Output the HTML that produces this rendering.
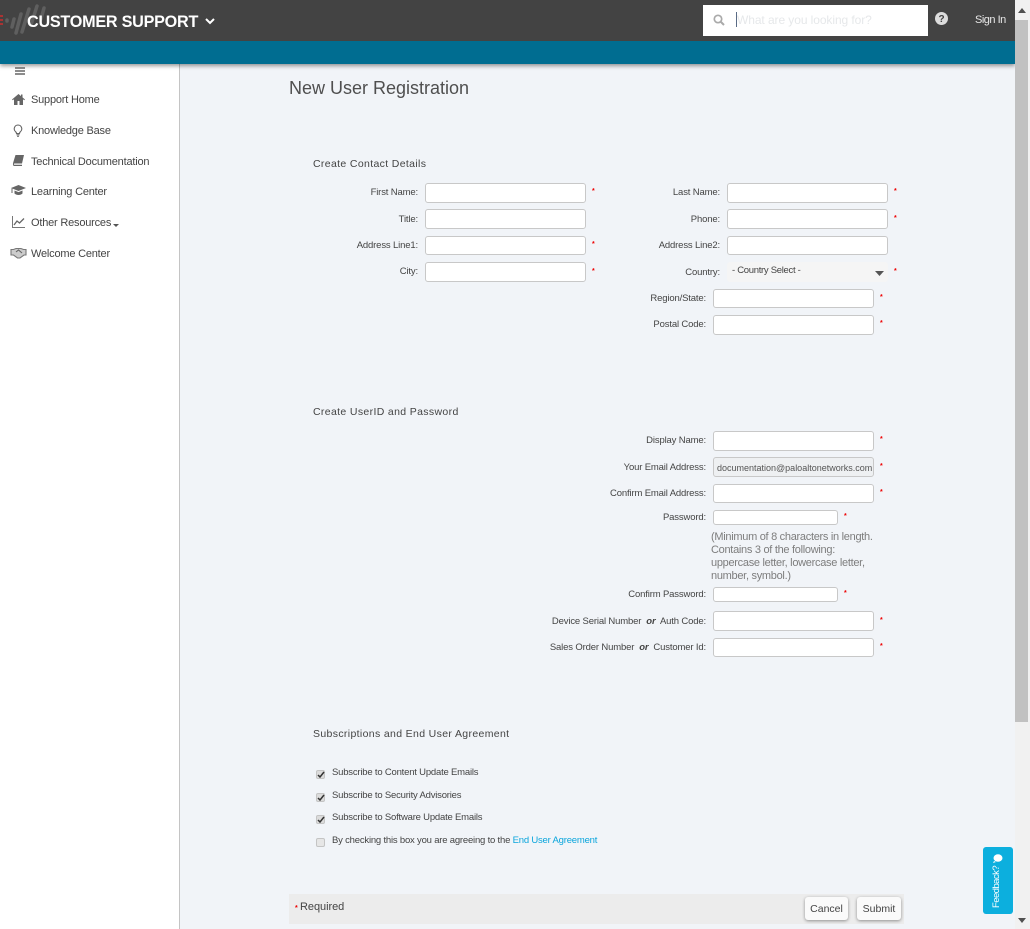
<!DOCTYPE html>
<html lang="en">
<head>
<meta charset="utf-8">
<title>New User Registration</title>
<style>
html,body{margin:0;padding:0;width:1030px;height:929px;overflow:hidden;background:#f1f4f8;font-family:"Liberation Sans",sans-serif;color:#4a4a4a}
div,span,a{position:absolute;white-space:nowrap;box-sizing:border-box}
a{text-decoration:none}
svg{position:absolute;overflow:visible}
.top{left:0;top:0;width:1015px;height:41px;background:#434343}
.teal{left:0;top:41px;width:1015px;height:23px;background:#006d91;box-shadow:0 2px 4px rgba(0,0,0,.4)}
.side{left:0;top:64px;width:180px;height:865px;background:#fff;border-right:1px solid #c4c4c4}
.nav{left:31px;font-size:11px;letter-spacing:-.2px;color:#444;line-height:14px;margin-top:1px}
.l{font-size:9.5px;line-height:12px;text-align:right;color:#444;font-weight:400;letter-spacing:-.15px;margin-top:1px}
.i{background:#fff;border:1px solid #c8c8c8;border-radius:3px}
.r{color:#e00;font-size:7px;line-height:9px;font-weight:700;margin-top:1px}
.h{left:313px;font-size:10.5px;line-height:13px;color:#444;letter-spacing:.35px;margin-top:1px}
.c{left:316px;width:9px;height:9px;background:#dcdcdc;border:1px solid #c4c4c4;border-radius:2px}
.ct{left:332px;font-size:9.5px;line-height:12px;color:#444;letter-spacing:-.2px;margin-top:1px}
.btn{height:23px;background:#fafafa;border-radius:3px;box-shadow:0 1px 3px rgba(0,0,0,.4);font-size:10.5px;line-height:24px;text-align:center;color:#444}
</style>
</head>
<body>
<div class="side"></div>
<div class="teal"></div>
<div class="top"></div>

<svg style="left:0;top:0" width="60" height="41" viewBox="0 0 60 41">
<path d="M0 16h3M0 20h3M0 24h3" stroke="#a33" stroke-width="2"/>
<g stroke="#5f5f5f" stroke-width="3.5" stroke-linecap="round" fill="none">
<path d="M7 20l0 1M14 19l-2 8M21 14l-5 19M29 9l-7 23M37 6l-6 19M44 8l-3 11"/>
</g>
</svg>
<div style="left:27px;top:12px;font-size:16.2px;line-height:20px;font-weight:700;color:#fff;letter-spacing:-.25px">CUSTOMER SUPPORT</div>
<svg style="left:205px;top:18px" width="10" height="7"><path d="M1 1l4 4 4-4" stroke="#fff" stroke-width="2" fill="none"/></svg>

<div style="left:703px;top:5px;width:225px;height:31px;background:#fff"></div>
<svg style="left:713px;top:14px" width="12" height="12"><circle cx="5" cy="5" r="3.7" stroke="#aaa" stroke-width="1.7" fill="none"/><path d="M8 8l3 3" stroke="#aaa" stroke-width="2"/></svg>
<div style="left:736px;top:12px;width:1px;height:15px;background:#5a6b85"></div>
<div style="left:737px;top:13px;font-size:12px;line-height:15px;color:#e6e8ea;letter-spacing:-.08px">What are you looking for?</div>
<svg style="left:935px;top:12px" width="13" height="13"><circle cx="6.5" cy="6.5" r="6.5" fill="#ddd"/><text x="6.5" y="10.2" font-size="10" font-weight="700" text-anchor="middle" fill="#434343" font-family="Liberation Sans">?</text></svg>
<div style="left:975px;top:14px;font-size:11px;line-height:13px;color:#e8e8e8;letter-spacing:-.5px">Sign In</div>

<svg style="left:15px;top:67px" width="10" height="8"><path d="M0 1h10M0 4h10M0 7h10" stroke="#666" stroke-width="1.5"/></svg>

<svg style="left:12px;top:93px" width="13" height="12" viewBox="0 0 13 12"><path d="M6.5 1L0 6.5l.8.8L2 6.3V12h3.5V8h2v4H11V6.3l1.2 1 .8-.8L10.5 4.4V1.5H9v1.6z" fill="#666"/></svg>
<div class="nav" style="top:92px">Support Home</div>
<svg style="left:13px;top:124px" width="10" height="13" viewBox="0 0 10 13"><path d="M5 1a3.8 3.8 0 0 0-2.4 6.7C3.3 8.4 3.5 9 3.5 9.5h3c0-.5.2-1.100.9-1.800A3.800 3.800 0 0 0 5 1z" fill="none" stroke="#666" stroke-width="1.100"/><path d="M3.500 10.800h3M4.200 12.400h1.600" stroke="#666" stroke-width="1.200"/></svg>
<div class="nav" style="top:123px">Knowledge Base</div>
<svg style="left:13px;top:155px" width="11" height="11" viewBox="0 0 11 11"><path d="M2.500 0H11L9 8.500H1.500c-.8 0-.8 1.300 0 1.300H9V11H1.200C-.2 11-.2 9 .2 7.500z" fill="#666"/></svg>
<div class="nav" style="top:154px">Technical Documentation</div>
<svg style="left:11px;top:185px" width="15" height="11" viewBox="0 0 15 11"><path d="M7.500 0L15 3 7.500 6 0 3z" fill="#666"/><path d="M3.500 5.500v3c2 2 6 2 8 0v-3l-4 1.600z" fill="#666"/><path d="M1 3.500V8" stroke="#666"/></svg>
<div class="nav" style="top:184px">Learning Center</div>
<svg style="left:12px;top:216px" width="13" height="12" viewBox="0 0 13 12"><path d="M.5 0v11.500H13" fill="none" stroke="#777"/><path d="M2 9l3-4 2.500 2L12 2.500" fill="none" stroke="#666" stroke-width="1.300"/></svg>
<div class="nav" style="top:215px">Other Resources</div>
<svg style="left:113px;top:224px" width="6" height="4"><path d="M0 0h6L3 3z" fill="#555"/></svg>
<svg style="left:11px;top:248px" width="15" height="10" viewBox="0 0 15 10"><path d="M0 1.500h2.500L5 .5h5l2.500 1H15V7h-2L9 10H6.500L2.500 7H0z" fill="#ccc" stroke="#777" stroke-width="1.100"/><path d="M5 4l2.500-2 3.500 3" fill="none" stroke="#666" stroke-width="1.100"/></svg>
<div class="nav" style="top:246px">Welcome Center</div>

<div style="left:289px;top:77px;font-size:18px;line-height:22px;color:#4f4f4f">New User Registration</div>
<div class="h" style="top:157px">Create Contact Details</div>

<div class="l" style="left:300px;width:118px;top:186px">First Name:</div><div class="i" style="left:425px;top:183px;width:161px;height:20px"></div><div class="r" style="left:592px;top:186px">*</div>
<div class="l" style="left:300px;width:118px;top:213px">Title:</div><div class="i" style="left:425px;top:209px;width:161px;height:20px"></div>
<div class="l" style="left:300px;width:118px;top:239px">Address Line1:</div><div class="i" style="left:425px;top:236px;width:161px;height:19px"></div><div class="r" style="left:592px;top:239px">*</div>
<div class="l" style="left:300px;width:118px;top:265px">City:</div><div class="i" style="left:425px;top:262px;width:161px;height:20px"></div><div class="r" style="left:592px;top:266px">*</div>

<div class="l" style="left:600px;width:120px;top:186px">Last Name:</div><div class="i" style="left:727px;top:183px;width:161px;height:20px"></div><div class="r" style="left:894px;top:186px">*</div>
<div class="l" style="left:600px;width:120px;top:213px">Phone:</div><div class="i" style="left:727px;top:209px;width:161px;height:20px"></div><div class="r" style="left:894px;top:213px">*</div>
<div class="l" style="left:600px;width:120px;top:239px">Address Line2:</div><div class="i" style="left:727px;top:236px;width:161px;height:19px"></div>
<div class="l" style="left:600px;width:120px;top:266px">Country:</div>
<div style="left:727px;top:262px;width:161px;height:20px;background:#f5f5f5;border-radius:3px"></div>
<div style="left:732px;top:265px;font-size:9.5px;line-height:12px;color:#444;letter-spacing:-.3px">- Country Select -</div>
<svg style="left:875px;top:271px" width="9" height="5"><path d="M0 0h9L4.500 5z" fill="#555"/></svg>
<div class="r" style="left:894px;top:266px">*</div>
<div class="l" style="left:600px;width:106px;top:292px">Region/State:</div><div class="i" style="left:713px;top:289px;width:161px;height:19px"></div><div class="r" style="left:880px;top:292px">*</div>
<div class="l" style="left:600px;width:106px;top:318px">Postal Code:</div><div class="i" style="left:713px;top:315px;width:161px;height:20px"></div><div class="r" style="left:880px;top:318px">*</div>

<div class="h" style="top:405px">Create UserID and Password</div>

<div class="l" style="left:500px;width:206px;top:434px">Display Name:</div><div class="i" style="left:713px;top:431px;width:161px;height:20px"></div><div class="r" style="left:880px;top:434px">*</div>
<div class="l" style="left:500px;width:206px;top:461px">Your Email Address:</div><div class="i" style="left:713px;top:457px;width:161px;height:20px;background:#eef0f2;font-size:9px;line-height:20px;padding-left:3px;color:#555;overflow:hidden">documentation@paloaltonetworks.com</div><div class="r" style="left:880px;top:461px">*</div>
<div class="l" style="left:500px;width:206px;top:487px">Confirm Email Address:</div><div class="i" style="left:713px;top:484px;width:161px;height:19px"></div><div class="r" style="left:880px;top:487px">*</div>
<div class="l" style="left:500px;width:206px;top:511px">Password:</div><div class="i" style="left:713px;top:510px;width:125px;height:15px"></div><div class="r" style="left:844px;top:511px">*</div>
<div style="left:711px;top:531px;font-size:11px;line-height:13px;color:#7d7d7d;letter-spacing:-.29px">(Minimum of 8 characters in length.<br>Contains 3 of the following:<br>uppercase letter, lowercase letter,<br>number, symbol.)</div>
<div class="l" style="left:500px;width:206px;top:588px">Confirm Password:</div><div class="i" style="left:713px;top:587px;width:125px;height:15px"></div><div class="r" style="left:844px;top:588px">*</div>
<div class="l" style="left:500px;width:206px;top:615px">Device Serial Number&nbsp; <b><i>or</i></b>&nbsp; Auth Code:</div><div class="i" style="left:713px;top:611px;width:161px;height:20px"></div><div class="r" style="left:880px;top:615px">*</div>
<div class="l" style="left:500px;width:206px;top:641px">Sales Order Number&nbsp; <b><i>or</i></b>&nbsp; Customer Id:</div><div class="i" style="left:713px;top:638px;width:161px;height:19px"></div><div class="r" style="left:880px;top:641px">*</div>

<div class="h" style="top:727px">Subscriptions and End User Agreement</div>

<div class="c" style="top:770px"></div><svg style="left:317px;top:771px" width="8" height="8"><path d="M1 4l2 2 4-5" stroke="#333" stroke-width="1.500" fill="none"/></svg>
<div class="ct" style="top:766px">Subscribe to Content Update Emails</div>
<div class="c" style="top:793px"></div><svg style="left:317px;top:794px" width="8" height="8"><path d="M1 4l2 2 4-5" stroke="#333" stroke-width="1.500" fill="none"/></svg>
<div class="ct" style="top:789px">Subscribe to Security Advisories</div>
<div class="c" style="top:815px"></div><svg style="left:317px;top:816px" width="8" height="8"><path d="M1 4l2 2 4-5" stroke="#333" stroke-width="1.500" fill="none"/></svg>
<div class="ct" style="top:811px">Subscribe to Software Update Emails</div>
<div class="c" style="top:838px;background:#e6e6e6"></div>
<div class="ct" style="top:834px">By checking this box you are agreeing to the <span style="position:static;color:#0aa5dc">End User Agreement</span></div>

<div style="left:289px;top:894px;width:615px;height:30px;background:#ececec"></div>
<div class="r" style="left:295px;top:903px">*</div>
<div style="left:300px;top:900px;font-size:11px;line-height:14px;color:#444;letter-spacing:-.05px">Required</div>
<div class="btn" style="left:805px;top:897px;width:43px">Cancel</div>
<div class="btn" style="left:857px;top:897px;width:44px">Submit</div>

<div style="left:983px;top:847px;width:30px;height:67px;background:#0cafde;border-radius:3px"></div>
<div style="left:990px;top:908px;font-size:9.5px;line-height:13px;color:#fff;letter-spacing:-.55px;transform-origin:0 0;transform:rotate(-90deg)">Feedback?</div>
<svg style="left:993px;top:854px" width="10" height="9"><ellipse cx="5" cy="4" rx="4.500" ry="3.800" fill="#fff"/><path d="M1 7l-1 2 3-1z" fill="#fff"/></svg>

<div style="left:1015px;top:0;width:15px;height:929px;background:#f1f1f1"></div>
<div style="left:1015px;top:20px;width:13px;height:702px;background:#c1c1c1"></div>
<svg style="left:1018px;top:8px" width="8" height="5"><path d="M0 5h8L4 0z" fill="#505050"/></svg>
<svg style="left:1018px;top:918px" width="8" height="5"><path d="M0 0h8L4 5z" fill="#505050"/></svg>
</body>
</html>
